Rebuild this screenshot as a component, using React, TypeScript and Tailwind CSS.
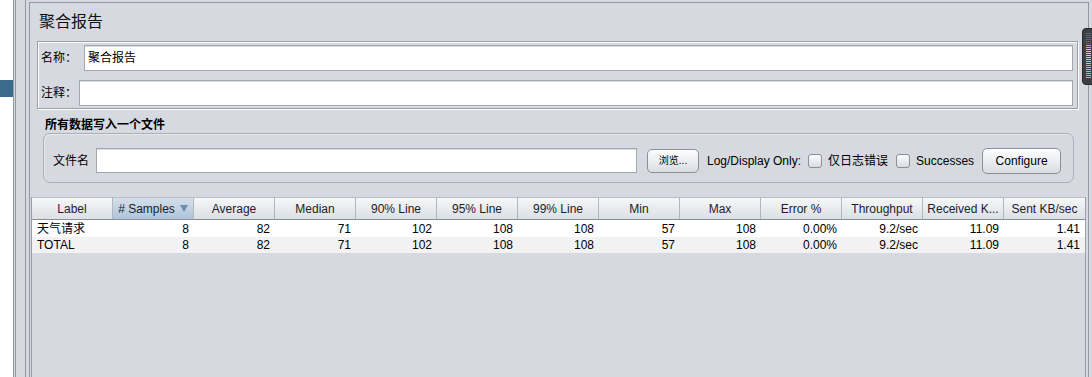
const columns = [
  'Label',
  '# Samples',
  'Average',
  'Median',
  '90% Line',
  '95% Line',
  '99% Line',
  'Min',
  'Max',
  'Error %',
  'Throughput',
  'Received K...',
  'Sent KB/sec',
]

const rows = [
  ['天气请求', '8', '82', '71', '102', '108', '108', '57', '108', '0.00%', '9.2/sec', '11.09', '1.41'],
  ['TOTAL', '8', '82', '71', '102', '108', '108', '57', '108', '0.00%', '9.2/sec', '11.09', '1.41'],
]

// level meter segments, top to bottom
const meterBars = [
  'bg-[#5f626a]', 'bg-[#5f626a]', 'bg-[#5f626a]', 'bg-[#5f626a]', 'bg-[#5f626a]', 'bg-[#5f626a]',
  'bg-[#f09a28]', 'bg-[#f2b22c]',
  'bg-[#f0d834]', 'bg-[#f0d834]', 'bg-[#ebe038]', 'bg-[#e0e63c]',
  'bg-[#c8e842]', 'bg-[#b4ea48]', 'bg-[#a0ec50]',
  'bg-[#86ec5c]', 'bg-[#74ec6a]', 'bg-[#66ea7a]', 'bg-[#5ee88a]',
  'bg-[#56e69c]', 'bg-[#52e4ac]', 'bg-[#4ee2ba]', 'bg-[#4ce0c6]',
]

function TextField({ value, className }: { value?: string; className: string }) {
  return (
    <div
      className={`bg-white border border-[#a3a7af] shadow-[inset_0_1px_0_#d9dce1] flex items-center pl-[3px] text-[12px] text-black ${className}`}
    >
      {value}
    </div>
  )
}

function NimbusButton({ label, className }: { label: string; className: string }) {
  return (
    <div
      className={`flex items-center justify-center rounded-[5px] border border-[#8c9098] bg-gradient-to-b from-[#fdfdfe] via-[#eceef1] to-[#d9dce1] shadow-[inset_0_1px_0_#fff] text-black ${className}`}
    >
      {label}
    </div>
  )
}

function CheckBox() {
  return (
    <div className="w-[14px] h-[14px] rounded-[3px] border border-[#8a8e96] bg-gradient-to-b from-[#fbfbfc] to-[#d9dce2]" />
  )
}

export default function App() {
  return (
    <div className="relative flex w-[1092px] h-[377px] overflow-hidden bg-[#d6d9df] font-['Liberation_Sans','Noto_Sans_CJK_SC',sans-serif] text-[12px] text-black">
      {/* tree on the left */}
      <div className="w-[13px] h-full bg-white">
        <div className="mt-[80px] h-[17px] bg-[#3b6a8c]" />
      </div>
      <div className="w-px h-full bg-[#9297a0]" />
      <div className="w-px h-full bg-[#d6d9df]" />
      <div className="w-px h-full bg-[#9297a0]" />
      <div className="w-[9px] h-full" />

      {/* main panel */}
      <div className="flex h-full border-l border-[#9297a0] pl-[3px]">
        <div className="mt-[2px] flex flex-col w-[1060px] border-l border-t border-r border-[#9297a0]">
          <div className="pt-[9px] pl-[9px] h-[29px] text-[16px] leading-[20px] text-[#111]">聚合报告</div>

          <div className="mt-[9px] ml-[7px] w-[1041px] h-[68px] border border-[#9a9ea6] shadow-[inset_1px_1px_0_#fff,1px_1px_0_#fff] flex flex-col pt-[3px] pl-[3px] pr-[4px] gap-[9px]">
            <div className="flex items-center h-[26px]">
              <div className="w-[43px]">名称：</div>
              <TextField value="聚合报告" className="flex-1 h-[26px]" />
            </div>
            <div className="flex items-center h-[26px]">
              <div className="w-[38px]">注释：</div>
              <TextField className="flex-1 h-[26px]" />
            </div>
          </div>

          <div className="mt-[8px] ml-[15px] h-[16px] leading-[16px] font-bold">所有数据写入一个文件</div>

          <div className="ml-[13px] w-[1031px] h-[50px] rounded-[7px] border border-[#aaaeb6] shadow-[inset_1px_1px_0_#e6e8ec] flex items-center pt-[5px] pl-[9px]">
            <div className="w-[43px]">文件名</div>
            <TextField className="w-[541px] h-[25px]" />
            <NimbusButton label="浏览..." className="ml-[10px] w-[52px] h-[24px] text-[10px]" />
            <div className="ml-[8px] text-[12px]">Log/Display Only:</div>
            <div className="ml-[7px]"><CheckBox /></div>
            <div className="ml-[6px]">仅日志错误</div>
            <div className="ml-[8px]"><CheckBox /></div>
            <div className="ml-[6px]">Successes</div>
            <NimbusButton label="Configure" className="ml-[8px] w-[79px] h-[26px] text-[12px]" />
          </div>

          {/* results table */}
          <div className="mt-[14px] ml-px w-[1055px] flex-1 flex flex-col border-l border-r border-[#9a9ea6]">
            <div className="flex h-[23px] border-t border-[#b9bdc5] border-b border-b-[#8a8e96]">
              {columns.map((c, i) => (
                <div
                  key={c}
                  className={`w-[81px] shrink-0 flex items-center justify-center border-r border-[#b3b7bf] text-[#1c1c2c] ${
                    i === 1
                      ? 'bg-gradient-to-b from-[#d3e0ec] to-[#aec5db]'
                      : 'bg-gradient-to-b from-[#f6f7f8] to-[#dcdfe4]'
                  } ${i === columns.length - 1 ? 'border-r-0' : ''}`}
                >
                  <span>{c}</span>
                  {i === 1 && (
                    <svg viewBox="0 0 8 7" className="ml-[5px] w-[8px] h-[7px]">
                      <path d="M0 0 H8 L4 7 Z" fill="#6d8eb0" />
                    </svg>
                  )}
                </div>
              ))}
            </div>
            {rows.map((r, ri) => (
              <div key={ri} className={`flex ${ri === 0 ? 'h-[17px] bg-white' : 'h-[16px] bg-[#f2f2f2]'}`}>
                {r.map((v, ci) => (
                  <div
                    key={ci}
                    className={`w-[81px] shrink-0 flex items-center leading-none ${
                      ci === 0 ? 'pl-[5px]' : 'justify-end pr-[5px]'
                    }`}
                  >
                    {v}
                  </div>
                ))}
              </div>
            ))}
          </div>
        </div>
      </div>

      {/* level meter overlay */}
      <div className="absolute left-[1082px] top-[28px] w-[14px] h-[57px] rounded-[4px] bg-[#3d4046] border border-[#25272b] flex flex-col items-start pt-[4px] pl-[3px] gap-px">
        {meterBars.map((c, i) => (
          <div key={i} className={`w-[5px] h-px shrink-0 ${c}`} />
        ))}
      </div>
    </div>
  )
}
